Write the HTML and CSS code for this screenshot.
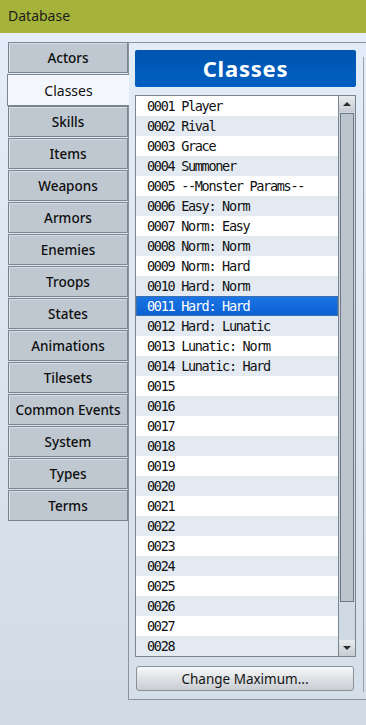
FILE: index.html
```html
<!DOCTYPE html>
<html lang="en">
<head>
    <meta charset="UTF-8">
    <title>Database</title>
    <link rel="stylesheet" href="styles.css">
</head>
<body>
<div class="title-bar">Database</div>

<div class="main">
    <!-- 左側タブ -->
    <div class="tabs">
        <div class="tab">Actors</div>
        <div class="tab active">Classes</div>
        <div class="tab">Skills</div>
        <div class="tab">Items</div>
        <div class="tab">Weapons</div>
        <div class="tab">Armors</div>
        <div class="tab">Enemies</div>
        <div class="tab">Troops</div>
        <div class="tab">States</div>
        <div class="tab">Animations</div>
        <div class="tab">Tilesets</div>
        <div class="tab">Common Events</div>
        <div class="tab">System</div>
        <div class="tab">Types</div>
        <div class="tab">Terms</div>
    </div>

    <div class="panel">
        <div class="list-column">
            <div class="list-header">Classes</div>

            <div class="list-box">
                <div class="rows">
                    <div class="row">0001 Player</div>
                    <div class="row">0002 Rival</div>
                    <div class="row">0003 Grace</div>
                    <div class="row">0004 Summoner</div>
                    <div class="row">0005 --Monster Params--</div>
                    <div class="row">0006 Easy: Norm</div>
                    <div class="row">0007 Norm: Easy</div>
                    <div class="row">0008 Norm: Norm</div>
                    <div class="row">0009 Norm: Hard</div>
                    <div class="row">0010 Hard: Norm</div>
                    <div class="row selected">0011 Hard: Hard</div>
                    <div class="row">0012 Hard: Lunatic</div>
                    <div class="row">0013 Lunatic: Norm</div>
                    <div class="row">0014 Lunatic: Hard</div>
                    <div class="row">0015</div>
                    <div class="row">0016</div>
                    <div class="row">0017</div>
                    <div class="row">0018</div>
                    <div class="row">0019</div>
                    <div class="row">0020</div>
                    <div class="row">0021</div>
                    <div class="row">0022</div>
                    <div class="row">0023</div>
                    <div class="row">0024</div>
                    <div class="row">0025</div>
                    <div class="row">0026</div>
                    <div class="row">0027</div>
                    <div class="row">0028</div>
                </div>
                <div class="scrollbar">
                    <div class="scroll-btn"><span class="arrow up"></span></div>
                    <div class="scroll-track">
                        <div class="scroll-thumb"></div>
                    </div>
                    <div class="scroll-btn"><span class="arrow down"></span></div>
                </div>
            </div>

            <button class="max-btn">Change Maximum...</button>
        </div>
        <div class="next-column"></div>
    </div>
</div>
</body>
</html>
```
FILE: styles.css
```css
/* ========== 全体 ========== */
:root {
    --border-dark: #7c858f;
    --tab-bg: #bfc7d0;
    --text: #141414;
}
html, body {
    height: 100%;
}
body {
    margin: 0;
    padding: 0;
    background: linear-gradient(#e5eefa 0%, #dae4ef 55%, #d0dbe6 100%);
    font-family: "Noto Sans", "Open Sans", sans-serif;
    color: var(--text);
    overflow: hidden;
}
.title-bar {
    height: 33px;
    line-height: 32px;
    padding-left: 8px;
    background-color: #a6b33a;
    font-size: 14px;
    color: #1c1c1c;
}
.main {
    display: flex;
    align-items: flex-start;
    padding-top: 9px;
    padding-left: 8px;
}

/* ========== タブ ========== */
.tabs {
    display: flex;
    flex-direction: column;
    width: 120px;
    flex-shrink: 0;
    position: relative;
    z-index: 1;
}
.tab {
    box-sizing: border-box;
    height: 31px;
    margin-bottom: 1px;
    border: 1px solid var(--border-dark);
    background-color: var(--tab-bg);
    box-shadow: inset 1px 1px 0 #d8dee5;
    display: flex;
    align-items: center;
    justify-content: center;
    font-size: 13.5px;
    font-weight: 500;
    color: #0e0e0e;
}
.tab.active {
    margin-left: -1px;
    margin-right: -1px;
    height: 32px;
    margin-bottom: 0;
    border-right: none;
    background-color: #f3f7fc;
    box-shadow: none;
    font-size: 14px;
    font-weight: 400;
}

/* ========== パネル ========== */
.panel {
    box-sizing: border-box;
    flex: 1;
    height: 658px;
    display: flex;
    border-top: 1px solid #8a929b;
    border-left: 1px solid #8a929b;
    border-bottom: 1px solid #8a929b;
    padding: 7px 0 7px 6px;
    background: linear-gradient(#e3edf9, #d5dfea);
}
.list-column {
    width: 221px;
    display: flex;
    flex-direction: column;
}
.next-column {
    margin-left: 7px;
    margin-top: 7px;
    width: 4px;
    border-left: 1px solid #9aa2ab;
}
.list-header {
    height: 37px;
    border-radius: 2px;
    background: linear-gradient(#0055ae, #005fc2);
    color: #fff;
    font-size: 22px;
    font-weight: 700;
    line-height: 36px;
    text-align: center;
    letter-spacing: 0.8px;
}

/* --- リスト --- */
.list-box {
    box-sizing: border-box;
    height: 562px;
    margin-top: 8px;
    border: 1px solid var(--border-dark);
    display: flex;
    overflow: hidden;
    background-color: #fff;
}
.rows {
    flex: 1;
    overflow: hidden;
}
.row {
    box-sizing: border-box;
    height: 20px;
    line-height: 21px;
    padding-left: 11px;
    font-family: "DejaVu Sans Mono", "Liberation Mono", monospace;
    font-size: 13.5px;
    letter-spacing: -1.3px;
    white-space: nowrap;
    color: #111;
    background-color: #fff;
}
.row:nth-child(even) {
    background-color: #e3eaf1;
}
.row.selected {
    background: linear-gradient(#1a74e4, #0b62d2);
    border: 1px solid #3b6fae;
    line-height: 19px;
    padding-left: 10px;
    color: #fff;
}

/* --- スクロールバー --- */
.scrollbar {
    width: 17px;
    box-sizing: border-box;
    border-left: 1px solid var(--border-dark);
    display: flex;
    flex-direction: column;
    background-color: #cfd9e3;
}
.scroll-btn {
    height: 16px;
    flex-shrink: 0;
    background: linear-gradient(#e8ebee, #c6ccd2);
    display: flex;
    align-items: center;
    justify-content: center;
}
.scroll-track {
    flex: 1;
    padding: 1px 1px 0 1px;
}
.scroll-thumb {
    box-sizing: border-box;
    height: 489px;
    border: 1px solid #6f7882;
    background-color: #bcc5ce;
}
.arrow {
    width: 0;
    height: 0;
    border-left: 4px solid transparent;
    border-right: 4px solid transparent;
}
.arrow.up {
    border-bottom: 4px solid #2a2a2a;
}
.arrow.down {
    border-top: 4px solid #2a2a2a;
}

/* --- ボタン --- */
.max-btn {
    margin-top: 9px;
    margin-left: 1px;
    width: 218px;
    height: 25px;
    border: 1px solid #8a9097;
    border-radius: 3px;
    background: linear-gradient(#f6f7f8, #dfe2e5 50%, #c9cdd2);
    font-family: "Noto Sans", "Open Sans", sans-serif;
    font-size: 13.5px;
    color: var(--text);
    padding: 0;
    cursor: pointer;
}
```
